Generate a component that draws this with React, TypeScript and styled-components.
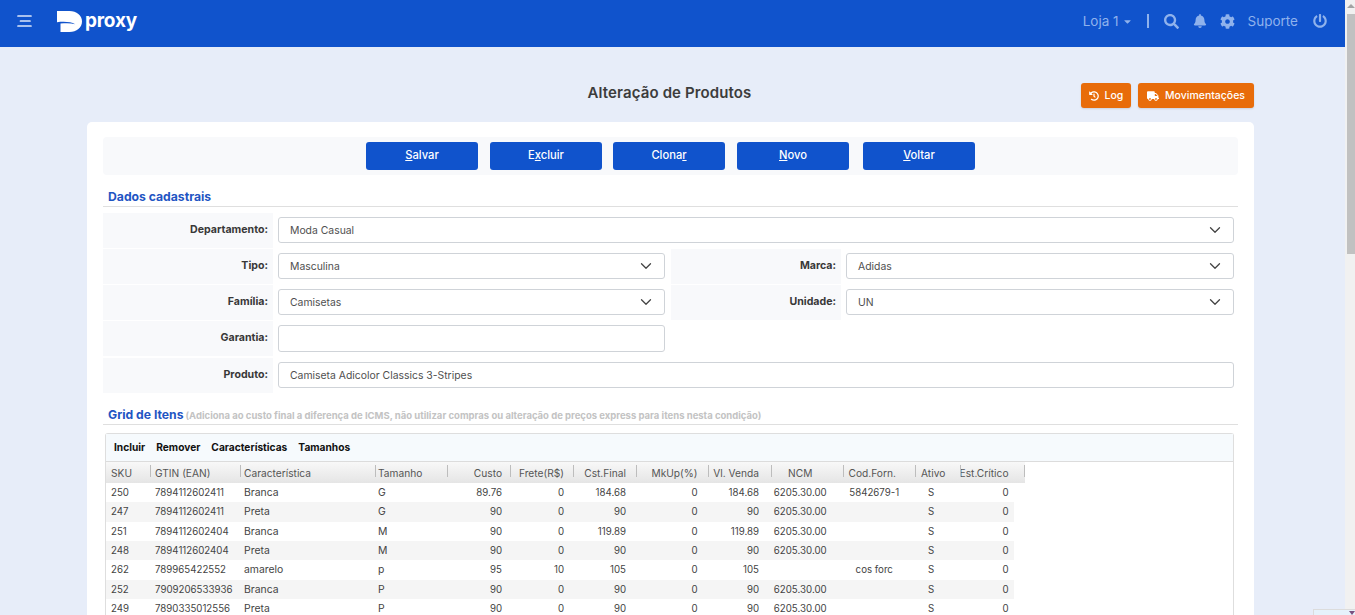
import React from "react";
import styled, { createGlobalStyle } from "styled-components";
import { FaSearch, FaBell, FaCog, FaPowerOff, FaHistory, FaTruck, FaCaretDown } from "react-icons/fa";
import { ChevronDown } from "lucide-react";

const Global = createGlobalStyle`
  html, body { margin: 0; padding: 0; height: 615px; overflow: hidden; }
  body { font-family: "Inter", "Open Sans", sans-serif; background: #e7edf9; color: #3d3d3d; }
  * { box-sizing: border-box; }
`;

const Shell = styled.div`
  display: flex;
  width: 1355px;
  height: 615px;
  overflow: hidden;
  position: relative;
`;
const Page = styled.div`
  width: 1345px;
  flex: none;
`;
const Scroll = styled.div`
  width: 10px;
  flex: none;
  background: #f1f1f1;
  display: flex;
  flex-direction: column;
  align-items: flex-end;
`;
const ScrollArrow = styled.div`
  width: 0;
  height: 0;
  margin: 4px 0 6px;
  border-left: 4px solid transparent;
  border-right: 4px solid transparent;
  border-bottom: 4px solid #a3a3a3;
`;
const ScrollThumb = styled.div`
  width: 8px;
  height: 240px;
  background: #c1c1c1;
`;
const TopBar = styled.header`
  height: 47px;
  background: #1053cc;
  display: flex;
  align-items: center;
  padding: 0 18px 5px 17px;
  color: #8fb2ec;
`;
const Brand = styled.div`
  display: flex;
  align-items: center;
  margin-left: 25px;
  color: #fff;
  font-size: 19px;
  font-weight: 700;
  letter-spacing: -0.2px;
  gap: 3px;
  margin-top: 1px;
`;
const BrandName = styled.span`
  margin-top: -3px;
`;
const TopRight = styled.div`
  margin-left: auto;
  display: flex;
  align-items: center;
  font-size: 13px;
`;
const TopText = styled.span`
  display: inline-flex;
  align-items: center;
  font-weight: 400;
  font-size: 13.5px;
`;
const Divider = styled.span`
  width: 2px;
  height: 14px;
  background: #8fb2ec;
  margin: 0 15px 0 14px;
`;
const Content = styled.main`
  padding: 0 91px 0 87px;
`;
const Heading = styled.div`
  height: 75px;
  display: flex;
  align-items: center;
  position: relative;
`;
const Title = styled.h1`
  margin: 16px 0 0;
  width: 100%;
  text-align: center;
  padding-right: 2px;
  font-size: 15px;
  font-weight: 600;
  letter-spacing: 0.12px;
  color: #3c3c3c;
`;
const HeadActions = styled.div`
  position: absolute;
  right: 0;
  top: 36px;
  display: flex;
  gap: 7px;
`;
const OrangeBtn = styled.button`
  height: 25px;
  border: 0;
  border-radius: 3px;
  background: #e86c0a;
  color: #fff;
  font: 500 10.5px "Inter", sans-serif;
  display: inline-flex;
  align-items: center;
  justify-content: center;
  gap: 6px;
  padding: 0;
  width: ${(p: { $w: number }) => p.$w}px;
  box-shadow: 0 1px 2px rgba(0,0,0,.12);
`;
const Card = styled.section`
  background: #fff;
  border-radius: 5px;
  padding: 15px 16px 0;
  height: 500px;
  overflow: hidden;
`;
const ActionBar = styled.div`
  height: 38px;
  background: #f8f9fb;
  border-radius: 4px;
  display: flex;
  justify-content: center;
  align-items: flex-start;
  padding-top: 5px;
  margin-bottom: 15px;
`;
const PrimaryBtn = styled.button`
  height: 28px;
  width: 112px;
  margin-right: ${(p: { $mr: number }) => p.$mr}px;
  border: 0;
  border-radius: 3px;
  background: #1053cc;
  color: #fff;
  font: 500 11.2px "Inter", sans-serif;
  padding: 0 0 2px;
  u { text-decoration: underline; }
`;
const Section = styled.h2`
  margin: 0;
  padding: 0 0 2px 5px;
  height: 17px;
  font-size: 12.2px;
  font-weight: 700;
  line-height: 14px;
  color: #1f55c3;
  border-bottom: 1px solid #dfdfdf;
  white-space: nowrap;
`;
const Hint = styled.span`
  font-size: 9.5px;
  font-weight: 700;
  color: #c3c3c3;
  margin-left: 2px;
`;
const FormGrid = styled.div`
  display: grid;
  grid-template-columns: 170px 398px 170px 397px;
  grid-template-rows: 36px 36px 36px 37px 36px;
  margin: 6px 0 14px;
`;
const Label = styled.div`
  background: #f8f9fb;
  display: flex;
  align-items: center;
  justify-content: flex-end;
  padding: 0 5px 2px 0;
  font-size: 10.6px;
  font-weight: 700;
  color: #383838;
  height: 35px;
`;
const FieldCell = styled.div<{ $span?: number; $pr?: number }>`
  padding: 4px ${(p) => p.$pr ?? 4}px 0 5px;
  grid-column: span ${(p) => p.$span ?? 1};
`;
const Field = styled.div<{ $h?: number }>`
  height: ${(p) => p.$h ?? 26}px;
  border: 1px solid #cfd3d8;
  border-radius: 3px;
  background: #fff;
  display: flex;
  align-items: center;
  justify-content: space-between;
  padding: 0 9px 0 11px;
  font-size: 10.4px;
  color: #4f4f4f;
`;
const Grid = styled.div`
  margin: 8px 4px 0 2px;
  border: 1px solid #dedede;
  border-bottom: 0;
  border-radius: 3px 3px 0 0;
`;
const GridTools = styled.div`
  height: 28px;
  background: #f6fafd;
  border-bottom: 1px solid #dcdcdc;
  display: flex;
  align-items: center;
  gap: 11px;
  padding: 0 8px 1px;
  font-size: 10.2px;
  font-weight: 700;
  color: #111;
`;
const Table = styled.div`
  display: grid;
  grid-template-columns: 45px 90px 135px 72px 63px 63px 63px 71.5px 63.5px 71.5px 72.5px 45px 63.5px;
  font-size: 9.7px;
  color: #444;
`;
const Head = styled.div`
  height: 21px;
  grid-column: 1 / -1;
  display: grid;
  grid-template-columns: subgrid;
  background: linear-gradient(#f8f8f8, #e5e5e5);
`;
const HeadCell = styled.div<{ $align?: string; $pl: number; $pr: number }>`
  display: flex;
  align-items: center;
  justify-content: ${(p) => p.$align ?? "flex-start"};
  padding: 0 ${(p) => p.$pr}px 0 ${(p) => p.$pl}px;
  font-size: 10.2px;
  color: #555;
  white-space: nowrap;
  overflow: hidden;
  position: relative;
  &::after {
    content: "";
    position: absolute;
    right: 0;
    top: 3px;
    height: 12px;
    width: 1px;
    background: #bdbdbd;
  }
`;
const Row = styled.div<{ $odd: boolean }>`
  grid-column: 1 / -1;
  display: grid;
  grid-template-columns: subgrid;
  height: 19.33px;
  margin-right: 11px;
  background: ${(p) => (p.$odd ? "#f5f5f5" : "#fff")};
`;
const Cell = styled.div<{ $align?: string; $pl: number; $pr: number; $word?: boolean }>`
  display: flex;
  align-items: center;
  justify-content: ${(p) => p.$align ?? "flex-start"};
  padding: 0 ${(p) => p.$pr}px 0 ${(p) => p.$pl}px;
  font-size: ${(p) => (p.$word ? "10.4px" : "9.7px")};
  white-space: nowrap;
`;
const Badge = styled.div`
  position: absolute;
  right: 0;
  bottom: 0;
  width: 42px;
  height: 6px;
  background: #e6f2fb;
  border: 1px solid #dcdcdc;
  border-bottom: 0;
  border-right: 0;
  display: flex;
  justify-content: flex-end;
  padding-top: 1px;
`;
const BadgeMark = styled.div`
  width: 0;
  height: 0;
  border-left: 3px solid transparent;
  border-right: 3px solid transparent;
  border-top: 4px solid #7a4f7f;
`;

const Logo = () => (
  <svg width="25" height="21" viewBox="0 0 25 21" aria-hidden="true">
    <path
      fill="#fff"
      d="M0 0H12.5C19.5 0 25 4.4 25 10.5S19.5 21 12.5 21H3.5V12.6C9 12 14 12 18.2 13.2 14 10.7 7 10.3 0 11.2Z"
    />
  </svg>
);
const Burger = () => (
  <svg width="15" height="12" viewBox="0 0 15 12" aria-hidden="true">
    <path d="M1 1H14M3.5 6H13M1 11H14" stroke="#dbe6f9" strokeWidth="1.7" strokeLinecap="round" />
  </svg>
);

const R = "flex-end";
const C = "center";
const heads: [string, string?][] = [
  ["SKU"], ["GTIN (EAN)"], ["Característica"], ["Tamanho"], ["Custo", R], ["Frete(R$)", R], ["Cst.Final", R],
  ["MkUp(%)", R], ["Vl. Venda", R], ["NCM", C], ["Cod.Forn."], ["Ativo"], ["Est.Crítico", R],
];
const rows = [
  ["250", "7894112602411", "Branca", "G", "89.76", "0", "184.68", "0", "184.68", "6205.30.00", "5842679-1", "S", "0"],
  ["247", "7894112602411", "Preta", "G", "90", "0", "90", "0", "90", "6205.30.00", "", "S", "0"],
  ["251", "7894112602404", "Branca", "M", "90", "0", "119.89", "0", "119.89", "6205.30.00", "", "S", "0"],
  ["248", "7894112602404", "Preta", "M", "90", "0", "90", "0", "90", "6205.30.00", "", "S", "0"],
  ["262", "789965422552", "amarelo", "p", "95", "10", "105", "0", "105", "", "cos forc", "S", "0"],
  ["252", "7909206533936", "Branca", "P", "90", "0", "90", "0", "90", "6205.30.00", "", "S", "0"],
  ["249", "7890335012556", "Preta", "P", "90", "0", "90", "0", "90", "6205.30.00", "", "S", "0"],
];
const aligns = [undefined, undefined, undefined, undefined, R, R, R, R, R, C, C, C, R];
const padL = [5, 4, 3, 2, 0, 0, 0, 0, 0, 0, 5, 5, 0];
const padR = [0, 0, 0, 0, 9, 10, 11, 11, 13, 15, 16, 20, 5];
const headPadR = [0, 0, 0, 0, 9, 10, 11, 11, 13, 15, 0, 0, 16];
const wordCols = [2, 3];

const Select = ({ value }: { value: string }) => (
  <Field>
    {value}
    <ChevronDown size={18} color="#444" strokeWidth={1.7} />
  </Field>
);

export default function App() {
  return (
    <Shell>
      <Global />
      <Page>
        <TopBar>
          <Burger />
          <Brand>
            <Logo />
            <BrandName>proxy</BrandName>
          </Brand>
          <TopRight>
            <TopText>Loja 1<FaCaretDown size={11} style={{ marginLeft: 3 }} /></TopText>
            <Divider />
            <FaSearch size={15} />
            <FaBell size={14} style={{ marginLeft: 14 }} />
            <FaCog size={15} style={{ marginLeft: 13 }} />
            <TopText style={{ marginLeft: 13 }}>Suporte</TopText>
            <FaPowerOff size={14} style={{ marginLeft: 15 }} />
          </TopRight>
        </TopBar>
        <Content>
          <Heading>
            <Title>Alteração de Produtos</Title>
            <HeadActions>
              <OrangeBtn $w={50}><FaHistory size={10} />Log</OrangeBtn>
              <OrangeBtn $w={116}><FaTruck size={12} />Movimentações</OrangeBtn>
            </HeadActions>
          </Heading>
          <Card>
            <ActionBar>
              <PrimaryBtn $mr={12}><u>S</u>alvar</PrimaryBtn>
              <PrimaryBtn $mr={11}>E<u>x</u>cluir</PrimaryBtn>
              <PrimaryBtn $mr={12}>Clona<u>r</u></PrimaryBtn>
              <PrimaryBtn $mr={14}><u>N</u>ovo</PrimaryBtn>
              <PrimaryBtn $mr={0}><u>V</u>oltar</PrimaryBtn>
            </ActionBar>
            <Section>Dados cadastrais</Section>
            <FormGrid>
              <Label>Departamento:</Label>
              <FieldCell $span={3}><Select value="Moda Casual" /></FieldCell>
              <Label>Tipo:</Label>
              <FieldCell $pr={6}><Select value="Masculina" /></FieldCell>
              <Label>Marca:</Label>
              <FieldCell><Select value="Adidas" /></FieldCell>
              <Label>Família:</Label>
              <FieldCell $pr={6}><Select value="Camisetas" /></FieldCell>
              <Label>Unidade:</Label>
              <FieldCell><Select value="UN" /></FieldCell>
              <Label>Garantia:</Label>
              <FieldCell $pr={6}><Field $h={27} /></FieldCell>
              <div />
              <div />
              <Label>Produto:</Label>
              <FieldCell $span={3}><Field>Camiseta Adicolor Classics 3-Stripes</Field></FieldCell>
            </FormGrid>
            <Section>
              Grid de Itens
              <Hint>(Adiciona ao custo final a diferença de ICMS, não utilizar compras ou alteração de preços express para itens nesta condição)</Hint>
            </Section>
            <Grid>
              <GridTools>
                <span>Incluir</span>
                <span>Remover</span>
                <span>Características</span>
                <span>Tamanhos</span>
              </GridTools>
              <Table>
                <Head>
                  {heads.map(([h, a], j) => (
                    <HeadCell key={h} $align={a} $pl={padL[j]} $pr={headPadR[j]}>{h}</HeadCell>
                  ))}
                </Head>
                {rows.map((r, i) => (
                  <Row key={r[0]} $odd={i % 2 === 1}>
                    {r.map((v, j) => (
                      <Cell key={j} $align={aligns[j]} $pl={padL[j]} $pr={padR[j]} $word={wordCols.includes(j)}>{v}</Cell>
                    ))}
                  </Row>
                ))}
              </Table>
            </Grid>
          </Card>
        </Content>
      </Page>
      <Scroll>
        <ScrollArrow />
        <ScrollThumb />
      </Scroll>
      <Badge><BadgeMark /></Badge>
    </Shell>
  );
}
